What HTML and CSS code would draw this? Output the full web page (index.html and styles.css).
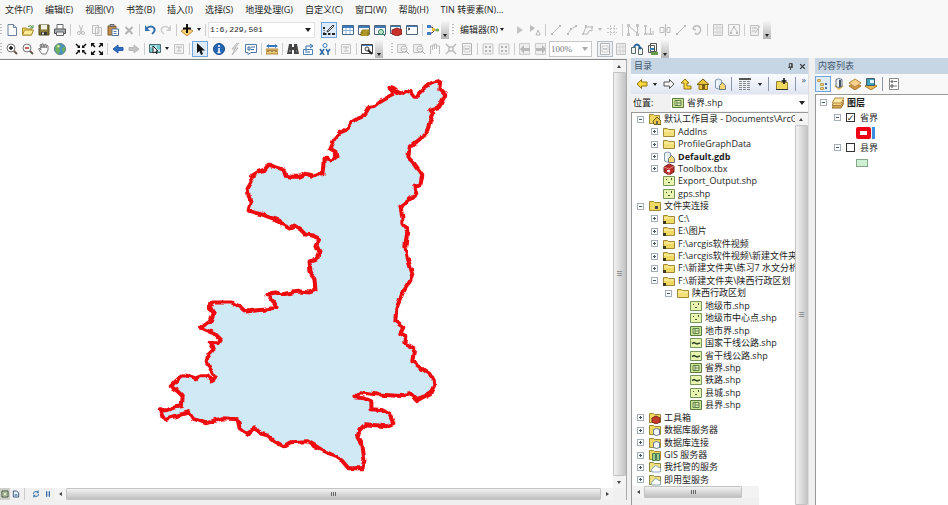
FILE: index.html
```html
<!DOCTYPE html>
<html lang="en">
<head>
<meta charset="utf-8">
<title>ArcMap</title>
<link rel="stylesheet" href="styles.css">
</head>
<body>
<svg class="sprite" aria-hidden="true">
  <symbol id="new" viewBox="0 0 12 12"><path d="M2 .5h5.500l3 3v8H2z" fill="#fff" stroke="#6a7f9c"/><path d="M7.500.5v3h3" fill="#dde8f4" stroke="#6a7f9c"/></symbol>
  <symbol id="open" viewBox="0 0 12 12"><path d="M.5 11V4h4l1 1h4v6z" fill="#f5d964" stroke="#a88b28"/><path d="M.5 11l2-5h9l-2 5z" fill="#ffec98" stroke="#a88b28"/><path d="M6 2.500q3-2 4.500 1M11 1v3H8" fill="none" stroke="#4a9444"/></symbol>
  <symbol id="save" viewBox="0 0 12 12"><path d="M1 1h10v10H1z" fill="#837a33" stroke="#4e4818"/><path d="M3 1h6v4.500H3z" fill="#f1f0e4"/><path d="M3 8h6v3H3z" fill="#333"/><path d="M4 8.500h2v2H4z" fill="#ddd"/></symbol>
  <symbol id="print" viewBox="0 0 12 12"><path d="M3 5V.5h6V5" fill="#fff" stroke="#666"/><path d="M.5 5h11v4.500H.5z" fill="#a5adb5" stroke="#555"/><path d="M2.500 8h7v3.500h-7z" fill="#eee" stroke="#666"/></symbol>
  <symbol id="cut" viewBox="0 0 12 12"><path d="M4 1l3 7M8 1L5 8" stroke="#c2c2c2" fill="none"/><circle cx="4" cy="9" r="1.500" fill="none" stroke="#bbb"/><circle cx="8" cy="9" r="1.500" fill="none" stroke="#bbb"/></symbol>
  <symbol id="copy" viewBox="0 0 12 12"><path d="M1.500 1.500h6v8h-6z M4.500 3.500h6v8h-6z" fill="#f3f3f3" stroke="#bdbdbd"/><path d="M6 6h3M6 8h3" stroke="#ccc"/></symbol>
  <symbol id="paste" viewBox="0 0 12 12"><path d="M1 2h8v9H1z" fill="#c38b45" stroke="#7c5b30"/><path d="M3 .5h4v2H3z" fill="#aaa" stroke="#666"/><path d="M5 5h6.500v6.500H5z" fill="#fff" stroke="#5572a0"/><path d="M6.500 7.500h3M6.500 9.500h3" stroke="#5b7cb2"/></symbol>
  <symbol id="del" viewBox="0 0 12 12"><path d="M2.500 3l7 7M9.500 3l-7 7" stroke="#b4b4b4" stroke-width="2"/></symbol>
  <symbol id="undo" viewBox="0 0 12 12"><path d="M3 4q4-3 7 0 2 3-2 6" fill="none" stroke="#3871ad" stroke-width="2"/><path d="M1 1v6h5z" fill="#3871ad"/></symbol>
  <symbol id="redo" viewBox="0 0 12 12"><path d="M9 4Q5 1 2 4q-2 3 2 6" fill="none" stroke="#ccc" stroke-width="1.500"/><path d="M11 1v6H6z" fill="#ccc"/></symbol>
  <symbol id="adddata" viewBox="0 0 12 12"><path d="M6 3l6 4-6 5-6-5z" fill="#f6ce77" stroke="#ba8e3c"/><path d="M6 0v9M2 4.500h8" stroke="#111" stroke-width="2"/></symbol>
  <symbol id="sketch" viewBox="0 0 12 12"><path d="M5 6l5-5 1 1-5 5-2 1z" fill="#fff" stroke="#333"/><path d="M1 4v6h10" fill="none" stroke="#333" stroke-dasharray="1 1"/><path d="M0 3h2v2H0zM0 9h3v2H0zM5 9h2v2H5zM9 9h3v2H9z" fill="#222"/></symbol>
  <symbol id="table" viewBox="0 0 12 12"><path d="M.5 1.500h11v9H.5z" fill="#fff" stroke="#41678f"/><path d="M1 2h10v2H1z" fill="#3b7cc0"/><path d="M4 4v6M8 4v6M1 6.500h10" stroke="#8db4d8"/></symbol>
  <symbol id="catalog" viewBox="0 0 12 12"><path d="M.5 1.500h11v9H.5z" fill="#fff" stroke="#52657d"/><path d="M1 2h10v2H1z" fill="#417bb6"/><path d="M4 6h7v4H4zM3 8h7v4H3z" fill="#d9bd34" stroke="#87731b"/></symbol>
  <symbol id="search" viewBox="0 0 12 12"><path d="M.5 1.500h11v9H.5z" fill="#f8fafc" stroke="#52657d"/><path d="M1 2h10v2H1z" fill="#417bb6"/><circle cx="7" cy="8" r="2.500" fill="#bfead0" stroke="#2c8060"/><path d="M9 10l2 2" stroke="#2c8060"/></symbol>
  <symbol id="toolwin" viewBox="0 0 12 12"><path d="M.5 1.500h10v8H.5z" fill="#f8fafc" stroke="#52657d"/><path d="M1 2h9v1H1z" fill="#417bb6"/><path d="M2 6l5-2 5 2v4l-5 2-5-2z" fill="#c9302b" stroke="#8d2420"/></symbol>
  <symbol id="toolbox" viewBox="0 0 12 12"><path d="M1 4l5-3 5 2v6l-5 3-5-3z" fill="#bc2d29" stroke="#752420"/><path d="M1 4l5 2 5-3M6 6v6" stroke="#e58278" fill="none"/><path d="M4 7h3v2H4z" fill="#eee"/></symbol>
  <symbol id="python" viewBox="0 0 12 12"><path d="M.5 1.500h11v9H.5z" fill="#f8fafc" stroke="#52657d"/><path d="M1 2h10v1H1z" fill="#417bb6"/><path d="M2 4l2 1-2 1" stroke="#333" fill="none"/></symbol>
  <symbol id="model" viewBox="0 0 12 12"><path d="M2 3h3l3 3M2 9h3l3-3h2" fill="none" stroke="#444"/><path d="M0 1h4v3H0z" fill="#427bc2"/><path d="M0 8h4v3H0z" fill="#427bc2"/><path d="M5 4h3v3H5z" fill="#eebd33"/><circle cx="10.500" cy="6" r="1.500" fill="#63a94d"/></symbol>
  <symbol id="zin" viewBox="0 0 12 12"><path d="M7 7l4 4" stroke="#66584e" stroke-width="2"/><circle cx="5" cy="5" r="4" fill="#f5f5f5" stroke="#777"/><path d="M5 3v4M3 5h4" stroke="#111" stroke-width="1.500"/></symbol>
  <symbol id="zout" viewBox="0 0 12 12"><path d="M7 7l4 4" stroke="#66584e" stroke-width="2"/><circle cx="5" cy="5" r="4" fill="#f5f5f5" stroke="#777"/><path d="M3 5h4" stroke="#b33" stroke-width="1.500"/></symbol>
  <symbol id="pan" viewBox="0 0 12 12"><path d="M4 11L1 7V5l2 2-1-5 1-1 1 4V1l1-.500L6 5l1-4 1 .500V5l1-3 1 1v4l-2 4z" fill="#fff" stroke="#777"/></symbol>
  <symbol id="globe" viewBox="0 0 12 12"><circle cx="6" cy="6" r="5.500" fill="#4c94c3" stroke="#577c85"/><path d="M2 2q4-2 5 1L5 5l1 3-2 3Q0 8 2 2zM8 5l3-1v3L9 10z" fill="#70b356"/><path d="M3 2l3 1-2 2z" fill="#e8f6d4"/></symbol>
  <symbol id="fin" viewBox="0 0 12 12"><path d="M1 1l3.500 3.500M11 1L7.500 4.500M1 11l3.500-3.500M11 11L7.500 7.500" stroke="#111" stroke-width="1.500"/><path d="M5 2v3H2zM7 2v3h3zM5 10V7H2zM7 10V7h3z" fill="#111"/></symbol>
  <symbol id="fout" viewBox="0 0 12 12"><path d="M1 1l3 3M11 1L8 4M1 11l3-3M11 11L8 8" stroke="#111" stroke-width="1.500"/><path d="M0 0h4L0 4zM12 0v4L8 0zM0 12V8l4 4zM12 12H8l4-4z" fill="#111"/></symbol>
  <symbol id="back" viewBox="0 0 12 12"><path d="M1 6l5-4v2.500h5v3H6V10z" fill="#2d6fc4" stroke="#2858a5"/></symbol>
  <symbol id="fwd" viewBox="0 0 12 12"><path d="M11 6L6 2v2.500H1v3h5V10z" fill="#c3c3c3" stroke="#b8b8b8"/></symbol>
  <symbol id="selfeat" viewBox="0 0 12 12"><path d="M.5 1.500h11v8H.5z" fill="#75c8cf" stroke="#4b6e74"/><path d="M1 3l4 2 1 4M7 2v4l4 2" stroke="#fff" fill="none"/><path d="M4 3l5 5H7l1 3-2-2-2 1z" fill="#fff" stroke="#222"/></symbol>
  <symbol id="gray" viewBox="0 0 12 12"><path d="M1.500 1.500h9v9h-9z" fill="#f1f1f1" stroke="#c4c4c4"/><path d="M3 4h6M6 4v3M4 8h4" stroke="#bbb" fill="none"/></symbol>
  <symbol id="pointer" viewBox="0 0 12 12"><path d="M3 0v10l2.500-2L7 12l2-1-1.500-3.500H11z" fill="#111"/></symbol>
  <symbol id="info" viewBox="0 0 12 12"><circle cx="6" cy="6" r="5.500" fill="#2468b5" stroke="#194b86"/><path d="M6 2v2M6 5v5M4.500 9.500h3" stroke="#fff" stroke-width="1.500"/></symbol>
  <symbol id="flash" viewBox="0 0 12 12"><path d="M8 0L3 6h3l-3 6 6-7H6l4-5z" fill="#ddd" stroke="#b8b8b8"/></symbol>
  <symbol id="popup" viewBox="0 0 12 12"><path d="M.5 1.500h11v8H6l-3 2v-2H.5z" fill="#fff" stroke="#507aa7"/><path d="M3 4h2v3H3zM6 4h4M6 6.500h3" stroke="#386999" fill="none"/></symbol>
  <symbol id="measure" viewBox="0 0 12 12"><path d="M0 6h12v5H0z" fill="#edc570" stroke="#ad853c"/><path d="M2 7v2M4 7v1M6 7v2M8 7v1M10 7v2" stroke="#5c4a25"/><path d="M0 3l3-2v1h6V1l3 2-3 2V4H3v1z" fill="#3877bd"/></symbol>
  <symbol id="find" viewBox="0 0 12 12"><path d="M2 1h3v3h2V1h3l2 10H7V7H5v4H0z" fill="#454545"/><path d="M2 8h2M9 8h1" stroke="#aaa"/></symbol>
  <symbol id="route" viewBox="0 0 12 12"><path d="M.5 6.500h9v5h-9z" fill="#fff" stroke="#4d82b8"/><path d="M3 8V3h6M7 1l3 2-3 2M2 9h5" fill="none" stroke="#3270aa"/></symbol>
  <symbol id="xy" viewBox="0 0 12 12"><circle cx="6" cy="2.500" r="2" fill="#fff" stroke="#347abb"/><path d="M1 6l4 6M5 6l-4 6M7 6l2 3 2-3M9 9v3" fill="none" stroke="#2e6cab" stroke-width="1.500"/></symbol>
  <symbol id="viewer" viewBox="0 0 12 12"><path d="M.5 1.500h11v9H.5z" fill="#fff" stroke="#444"/><path d="M1 2h10v1H1z" fill="#4c83bf"/><circle cx="6" cy="6" r="2" fill="#eee" stroke="#444"/><path d="M7 7l4 4" stroke="#222" stroke-width="2"/></symbol>
  <symbol id="gplay" viewBox="0 0 12 12"><path d="M4 2l6 4-6 4z" fill="#c3c3c3"/></symbol>
  <symbol id="gplay2" viewBox="0 0 12 12"><path d="M1 1l5 3-5 4z" fill="#bbb"/><path d="M9 6l2 5H7z" fill="none" stroke="#bbb"/></symbol>
  <symbol id="gline" viewBox="0 0 12 12"><path d="M2 10l7-7" stroke="#bdbdbd"/><path d="M1 9h2v2H1zM9 1h2v2H9z" fill="#b9b9b9"/></symbol>
  <symbol id="garc" viewBox="0 0 12 12"><path d="M2 11q1-6 7-8" stroke="#bdbdbd" fill="none"/><path d="M1 9h2v2H1zM4 4h2v2H4zM9 1h2v2H9z" fill="#b9b9b9"/></symbol>
  <symbol id="gpoly" viewBox="0 0 12 12"><path d="M1 10L4 3h6v4q-4-2-4 3z" stroke="#b9b9b9" fill="none"/><path d="M3 1h2v3H3zM9 2h2v2H9zM0 9h2v2H0z" fill="#c2c2c2"/></symbol>
  <symbol id="gsnap" viewBox="0 0 12 12"><path d="M1 4.500h10M1 8.500h10M4.500 1v10M8.500 1v10" stroke="#c6c6c6" fill="none" stroke-dasharray="2 1"/></symbol>
  <symbol id="gvert" viewBox="0 0 12 12"><path d="M1.500 10.500v-9l9 8v-8" stroke="#bbb" fill="none"/><path d="M0 0h3v3H0zM0 9h3v3H0zM9 0h3v3H9zM9 9h3v3H9z" fill="#c5c5c5"/></symbol>
  <symbol id="gresh" viewBox="0 0 12 12"><path d="M2.500 1v9h5V4M10 7v4" stroke="#bbb" fill="none"/><path d="M1 1h3v2H1zM1 9h3v2H1zM6 9h3v2H6z" fill="#c5c5c5"/></symbol>
  <symbol id="gcut" viewBox="0 0 12 12"><path d="M6.500 0v12M1 3.500h4v5H1zM8 3.500h3v5H8z" stroke="#bbb" fill="none"/></symbol>
  <symbol id="grot" viewBox="0 0 12 12"><path d="M2 5q1-4 5-3 4 2 2 6-3 4-5 1M2 5l3 1" stroke="#bbb" fill="none" stroke-width="1.500"/></symbol>
  <symbol id="ggrid" viewBox="0 0 12 12"><path d="M1.500.5h9v11h-9z" fill="#eee" stroke="#c2c2c2"/><path d="M2 4h8M2 8h8M5 1v10M8 1v10" stroke="#d4d4d4"/></symbol>
  <symbol id="gtri" viewBox="0 0 12 12"><path d="M.5.5h11v11H.5z" fill="#f4f4f4" stroke="#c2c2c2"/><path d="M2 9l4-6 4 6" fill="none" stroke="#bbb"/><path d="M5 2h2v2H5zM2 8h2v2H2zM8 8h2v2H8z" fill="#bbb"/></symbol>
  <symbol id="gform" viewBox="0 0 12 12"><path d="M1.500 1.500h8v10h-8z" fill="#eee" stroke="#c0c0c0"/><path d="M3 4h5M3 7h3M6 9l5-7" stroke="#bbb"/></symbol>
  <symbol id="gzoom" viewBox="0 0 12 12"><path d="M.5 1.500h8v8h-8z" fill="#eee" stroke="#c2c2c2"/><circle cx="7" cy="6" r="3" fill="#f6f6f6" stroke="#b6b6b6"/><path d="M5.500 6h3M9 8l3 3" stroke="#aaa"/></symbol>
  <symbol id="gpan" viewBox="0 0 12 12"><path d="M1.500 11V3h2v4-5h2v4-5h2v5-3h3v8" fill="none" stroke="#bbb"/></symbol>
  <symbol id="gfull" viewBox="0 0 12 12"><path d="M1 1l3 3M11 1L8 4M1 11l3-3M11 11L8 8M4 4h4v4H4z" stroke="#bbb" fill="none" stroke-width="1.500"/></symbol>
  <symbol id="gfour" viewBox="0 0 12 12"><path d="M1 1h10v10H1z" fill="#f0f0f0" stroke="#c8c8c8"/><path d="M3 3h2v2H3zM7 3h2v2H7zM3 7h2v2H3zM7 7h2v2H7z" fill="#b5b5b5"/></symbol>
  <symbol id="gback" viewBox="0 0 12 12"><path d="M.5.5h10v11H.5z" fill="#eee" stroke="#ccc"/><path d="M1 6l4-4v3h6v3H5v3z" fill="#b9b9b9"/></symbol>
  <symbol id="gnext" viewBox="0 0 12 12"><path d="M.5.5h10v11H.5z" fill="#eee" stroke="#ccc"/><path d="M11 6L7 2v3H1v3h6v3z" fill="#b9b9b9"/></symbol>
  <symbol id="gpage" viewBox="0 0 12 12"><path d="M1.500.5h9v11h-9z" fill="#f8f8f8" stroke="#b4b4b4"/><path d="M3 3h6v6H3z" fill="none" stroke="#ccc"/><path d="M4 6h4" stroke="#999"/></symbol>
  <symbol id="frames" viewBox="0 0 12 12"><path d="M.5 4.500h4v6h-4zM7.500 5.500h4v6h-4z" fill="#eef5f0" stroke="#5a6a66"/><path d="M3 4q3-5 6 0" stroke="#28669c" fill="none" stroke-width="2"/><path d="M7 4h4L9 7z" fill="#28669c"/></symbol>
  <symbol id="driven" viewBox="0 0 12 12"><path d="M3.500.5h6v8h-6zM1.500 2.500h6v7h-6z" fill="#f5f7f0" stroke="#555"/><path d="M4 9h7v3H4z" fill="#669b48"/><path d="M3 5h4v2H3z" fill="#377eba"/></symbol>
  <symbol id="yback" viewBox="0 0 12 12"><path d="M1 6l4.500-4.500V4H11v4H5.500v2.500z" fill="#ffd83e" stroke="#8e7317"/></symbol>
  <symbol id="wfwd" viewBox="0 0 12 12"><path d="M11 6L6.500 1.500V4H1v4h5.500v2.500z" fill="#f5f5f5" stroke="#555"/></symbol>
  <symbol id="up" viewBox="0 0 12 12"><path d="M5 1l4 4H7v3h4v3H4V5H1z" fill="#ffd83e" stroke="#8e7317"/></symbol>
  <symbol id="home" viewBox="0 0 12 12"><path d="M2 6v5.500h8.500V6" fill="#edca46" stroke="#8e7317"/><path d="M0 6.500L6 1l6 5.500z" fill="#eac23e" stroke="#755e10"/><path d="M5 7h3v4H5z" fill="#7c5d20"/></symbol>
  <symbol id="gdbhome" viewBox="0 0 12 12"><path d="M1.500 2q3-2 6 0v8q-3 2-6 0z" fill="#e6eef5" stroke="#8499ac"/><path d="M5.500 7.500l3-3 3 3v4h-6z" fill="#f5d871" stroke="#6c7785"/><path d="M3 3v6" stroke="#fff"/></symbol>
  <symbol id="grid" viewBox="0 0 12 12"><path d="M0 1h12" stroke="#555" stroke-width="2"/><path d="M0 3.500h12M0 5.500h12M0 7.500h12M0 9.500h12M0 11.500h12" stroke="#888" stroke-dasharray="3 1"/></symbol>
  <symbol id="connect" viewBox="0 0 12 12"><path d="M.5 3.500h4l1 1h6v7H.5z" fill="#f2d85f" stroke="#96802f"/><path d="M8 0v6M5.500 3h5" stroke="#111" stroke-width="1.500"/><path d="M0 11.500h12" stroke="#333"/></symbol>
  <symbol id="folder" viewBox="0 0 12 12"><path d="M.5 10.500v-8h4l1 1h6v7z" fill="#f3df77" stroke="#a08939"/><path d="M1 5h10" stroke="#fff3b5"/></symbol>
  <symbol id="folderc" viewBox="0 0 12 12"><path d="M.5 10.500v-8h4l1 1h6v7z" fill="#f0d962" stroke="#a08939"/><path d="M1 5h10" stroke="#fff3b5"/><path d="M0 8h3v3H0z" fill="#3c3821"/></symbol>
  <symbol id="fhome" viewBox="0 0 12 12"><path d="M.5 10.500v-9h4l1 1h5v8z" fill="#f0d962" stroke="#a08939"/><path d="M4 8l4-4 4 4v3.500H5z" fill="#e9c343" stroke="#705e20"/><path d="M7 8h2v3H7z" fill="#665"/></symbol>
  <symbol id="fconn" viewBox="0 0 12 12"><path d="M.5 10.500v-9h4l1 1h6v8z" fill="#f0d962" stroke="#a08939"/><path d="M6 6h3v3H6z" fill="#444"/></symbol>
  <symbol id="ftool" viewBox="0 0 12 12"><path d="M.5 10.500v-9h4l1 1h6v8z" fill="#f0d962" stroke="#a08939"/><path d="M3 6l4-2 4 2v4l-4 2-4-2z" fill="#c33d2c" stroke="#7d241c"/></symbol>
  <symbol id="fdb" viewBox="0 0 12 12"><path d="M.5 10.500v-9h4l1 1h6v8z" fill="#f0d962" stroke="#a08939"/><path d="M4.500 5.500q3-2 6 0v5q-3 2-6 0z" fill="#f4f7f9" stroke="#66798c"/></symbol>
  <symbol id="fgis" viewBox="0 0 12 12"><path d="M.5 10.500v-9h4l1 1h6v8z" fill="#f0d962" stroke="#a08939"/><path d="M3.500 4.500h3v7h-3zM7.500 4.500h3v7h-3z" fill="#9fca8f" stroke="#4a7e54"/></symbol>
  <symbol id="fcloud" viewBox="0 0 12 12"><path d="M.5 10.500v-9h4l1 1h6v8z" fill="#f0df82" stroke="#8b8b43"/><path d="M3 11q-2-3 1-4 2-4 5-1 4 1 2 5z" fill="#fff" stroke="#86a7b7"/></symbol>
  <symbol id="pts" viewBox="0 0 12 12"><path d="M.5 1.500h11v9H.5z" fill="#e8f4b0" stroke="#76965a"/><path d="M3 4h1v1H3zM8 3h1v2H8zM5 7h2v1H5z" fill="#3b5630"/></symbol>
  <symbol id="poly" viewBox="0 0 12 12"><path d="M.5 1.500h11v9H.5z" fill="#cfe392" stroke="#587a43"/><path d="M3 3.500h6v5H3zM5 4v4M5 6h4" fill="#e3f0b2" stroke="#5e8150"/></symbol>
  <symbol id="lin" viewBox="0 0 12 12"><path d="M.5 1.500h11v9H.5z" fill="#e8f4b0" stroke="#76965a"/><path d="M2 6.500l2-1 3 1.500 3-1" fill="none" stroke="#33482b" stroke-width="1.500"/></symbol>
  <symbol id="layers" viewBox="0 0 12 12"><path d="M3 6h9l-3 5H0z" fill="#dda951" stroke="#96702e"/><path d="M3 3.500h9l-3 5H0z" fill="#f6d183" stroke="#a6803c"/><path d="M3 1h9L9 6H0z" fill="#ffe8aa" stroke="#b28b43"/></symbol>
  <symbol id="order" viewBox="0 0 12 12"><path d="M.5 1.500h3v2h-3zM3.500 5.500h3v2h-3zM3.500 9.500h3v2h-3z" fill="#f1cb64" stroke="#c0a25c"/><path d="M9 5v2M9 9v2" stroke="#456f9e" stroke-width="2"/></symbol>
  <symbol id="source" viewBox="0 0 12 12"><path d="M1 8l4-2 6 2-5 4z" fill="#e8bd4a"/><path d="M3 1.500q3-2 6 0v7q-3 2-6 0z" fill="#edf1f5" stroke="#647487"/><path d="M7 2v7" stroke="#4a5665" stroke-width="2"/></symbol>
  <symbol id="visible" viewBox="0 0 12 12"><path d="M6 5l6 3-6 4-6-4z" fill="#d49943" stroke="#a6752d"/><path d="M6 1l6 4-6 4-6-4z" fill="#f9d18b" stroke="#b38643"/></symbol>
  <symbol id="selected" viewBox="0 0 12 12"><path d="M6 5l6 3-6 4-6-4z" fill="#e8b750" stroke="#a6752d"/><path d="M1.500.5h8v7h-8z" fill="#3da2b6" stroke="#425c6e"/><path d="M5 2h4v3H5z" fill="#dff7ff"/></symbol>
  <symbol id="options" viewBox="0 0 12 12"><path d="M1.500.5h9v11h-9z" fill="#fff" stroke="#888"/><path d="M3 3h2v1H3zM3 7h2v2H3z" fill="none" stroke="#555"/><path d="M6 3.500h3M6 8h3" stroke="#777"/></symbol>
  <symbol id="refresh" viewBox="0 0 12 12"><path d="M2 6q0-4 5-4l2 1M10 6q0 4-5 4L3 9" stroke="#3a73a8" fill="none" stroke-width="1.500"/><path d="M10 0v5H6zM2 12V7h4z" fill="#3a73a8"/></symbol>
  <symbol id="pause" viewBox="0 0 12 12"><path d="M3 2h2v8H3zM7 2h2v8H7z" fill="#3c6da5"/></symbol>
  <symbol id="dataview" viewBox="0 0 12 12"><path d="M1.500 1.500h9v9h-9z" fill="#dbe8c6" stroke="#3e4a3e" stroke-width="1.500"/><path d="M4 4h4v4H4z" fill="#fafbed" stroke="#789364"/></symbol>
  <symbol id="layview" viewBox="0 0 12 12"><path d="M2 1.500h5l3 3v6H2z" fill="#e9f2fb" stroke="#405d80" stroke-width="1.500"/><path d="M4 6h4v3H4z" fill="#779ac0"/></symbol>
  <symbol id="pin" viewBox="0 0 12 12"><path d="M4 1h5v6H4zM2 7.500h8M6 8v4M8 1v6" stroke="#333" fill="none" stroke-width="1.500"/></symbol>
  <symbol id="close" viewBox="0 0 12 12"><path d="M2 2l8 8M10 2l-8 8" stroke="#333" stroke-width="2"/></symbol>
</svg>

<nav class="menubar">
  <button>文件(F)</button><button>编辑(E)</button><button>视图(V)</button><button>书签(B)</button><button>插入(I)</button><button>选择(S)</button><button>地理处理(G)</button><button>自定义(C)</button><button>窗口(W)</button><button>帮助(H)</button><button>TIN 转要素(N)...</button>
</nav>

<div class="toolbar">
  <i class="grip"></i>
  <button aria-label="New"><svg><use href="#new"/></svg></button><button aria-label="Open"><svg><use href="#open"/></svg></button><button aria-label="Save"><svg><use href="#save"/></svg></button><button aria-label="Print"><svg><use href="#print"/></svg></button>
  <i class="sep"></i>
  <button aria-label="Cut"><svg><use href="#cut"/></svg></button><button aria-label="Copy"><svg><use href="#copy"/></svg></button><button aria-label="Paste"><svg><use href="#paste"/></svg></button><button aria-label="Delete"><svg><use href="#del"/></svg></button>
  <i class="sep"></i>
  <button aria-label="Undo"><svg><use href="#undo"/></svg></button><button aria-label="Redo"><svg><use href="#redo"/></svg></button>
  <i class="sep"></i>
  <button aria-label="Add data"><svg><use href="#adddata"/></svg></button><button class="drop" aria-label="Add data menu"></button>
  <i class="sep"></i>
  <select class="scale" aria-label="Map scale"><option>1:6,229,501</option></select>
  <button class="on" aria-label="Editor toolbar"><svg><use href="#sketch"/></svg></button>
  <button aria-label="Contents"><svg><use href="#table"/></svg></button><button aria-label="Catalog"><svg><use href="#catalog"/></svg></button><button aria-label="Search"><svg><use href="#search"/></svg></button><button aria-label="Toolbox"><svg><use href="#toolwin"/></svg></button><button aria-label="Python"><svg><use href="#python"/></svg></button>
  <i class="sep"></i>
  <button aria-label="Model builder"><svg><use href="#model"/></svg></button>
  <button class="more" aria-label="Toolbar options"></button>
  <i class="grip"></i>
  <button class="text">编辑器(R)</button><button class="drop" aria-label="Editor menu"></button>
  <i class="sep blank"></i>
  <button aria-label="Edit tool"><svg><use href="#gplay"/></svg></button><button aria-label="Annotation"><svg><use href="#gplay2"/></svg></button>
  <i class="sep"></i>
  <button aria-label="Straight"><svg><use href="#gline"/></svg></button><button aria-label="Arc"><svg><use href="#garc"/></svg></button><button aria-label="Trace"><svg><use href="#gpoly"/></svg></button><button class="drop dim" aria-label="Trace menu"></button><button aria-label="Point"><svg><use href="#gsnap"/></svg></button>
  <i class="sep"></i>
  <button aria-label="Vertices"><svg><use href="#gvert"/></svg></button><button aria-label="Reshape"><svg><use href="#gresh"/></svg></button><button aria-label="Cut polygons"><svg><use href="#gcut"/></svg></button><button aria-label="Split"><svg><use href="#gline"/></svg></button><button aria-label="Rotate"><svg><use href="#grot"/></svg></button>
  <i class="sep"></i>
  <button aria-label="Attributes"><svg><use href="#ggrid"/></svg></button><button aria-label="Sketch properties"><svg><use href="#gtri"/></svg></button>
  <i class="sep"></i>
  <button aria-label="Create features"><svg><use href="#gform"/></svg></button>
  <button class="more" aria-label="Toolbar options"></button>
</div>

<div class="toolbar">
  <i class="grip"></i>
  <button aria-label="Zoom in"><svg><use href="#zin"/></svg></button><button aria-label="Zoom out"><svg><use href="#zout"/></svg></button><button aria-label="Pan"><svg><use href="#pan"/></svg></button><button aria-label="Full extent"><svg><use href="#globe"/></svg></button>
  <i class="sep blank"></i>
  <button aria-label="Fixed zoom in"><svg><use href="#fin"/></svg></button><button aria-label="Fixed zoom out"><svg><use href="#fout"/></svg></button>
  <i class="sep"></i>
  <button aria-label="Back"><svg><use href="#back"/></svg></button><button aria-label="Forward"><svg><use href="#fwd"/></svg></button>
  <i class="sep"></i>
  <button aria-label="Select features"><svg><use href="#selfeat"/></svg></button><button class="drop" aria-label="Select menu"></button><button aria-label="Clear selection"><svg><use href="#gray"/></svg></button>
  <i class="sep"></i>
  <button class="on" aria-label="Select elements"><svg><use href="#pointer"/></svg></button>
  <button aria-label="Identify"><svg><use href="#info"/></svg></button><button aria-label="Hyperlink"><svg><use href="#flash"/></svg></button><button aria-label="HTML popup"><svg><use href="#popup"/></svg></button>
  <i class="sep"></i>
  <button aria-label="Measure"><svg><use href="#measure"/></svg></button>
  <i class="sep"></i>
  <button aria-label="Find"><svg><use href="#find"/></svg></button><button aria-label="Find route"><svg><use href="#route"/></svg></button><button aria-label="Go to XY"><svg><use href="#xy"/></svg></button>
  <i class="sep"></i>
  <button aria-label="Time slider"><svg><use href="#gray"/></svg></button>
  <i class="sep"></i>
  <button aria-label="Viewer window"><svg><use href="#viewer"/></svg></button>
  <button class="more" aria-label="Toolbar options"></button>
  <i class="grip wide"></i>
  <button aria-label="Layout zoom in"><svg><use href="#gzoom"/></svg></button><button aria-label="Layout zoom out"><svg><use href="#gzoom"/></svg></button><button aria-label="Layout pan"><svg><use href="#gpan"/></svg></button><button aria-label="Whole page"><svg><use href="#gfull"/></svg></button><button aria-label="Actual size"><svg><use href="#gpage"/></svg></button>
  <i class="sep"></i>
  <button aria-label="Layout fixed in"><svg><use href="#gfour"/></svg></button><button aria-label="Layout fixed out"><svg><use href="#gfour"/></svg></button>
  <i class="sep"></i>
  <button aria-label="Layout back"><svg><use href="#gback"/></svg></button><button aria-label="Layout forward"><svg><use href="#gnext"/></svg></button>
  <select class="percent" aria-label="Layout zoom"><option>100%</option></select>
  <button class="on dim" aria-label="Draft mode"><svg><use href="#gpage"/></svg></button><button aria-label="Focus frame"><svg><use href="#ggrid"/></svg></button><button aria-label="Change layout"><svg><use href="#frames"/></svg></button><button aria-label="Driven pages"><svg><use href="#driven"/></svg></button>
  <button class="more" aria-label="Toolbar options"></button>
</div>

<main class="workspace">
  <section class="mapcol">
    <div class="maprow">
      <svg class="map" viewBox="0 60 614 427" role="img" aria-label="Map">
        <defs><filter id="rough" x="-5%" y="-5%" width="110%" height="110%" color-interpolation-filters="sRGB"><feTurbulence type="fractalNoise" baseFrequency=".16" numOctaves="1" seed="4"/><feDisplacementMap in="SourceGraphic" scale="5" xChannelSelector="R" yChannelSelector="G"/></filter></defs>
        <path class="province" filter="url(#rough)" d="M441 80L433 82 425 87 421 91 418 96 415 96 411 91 407 90 402 93 398 91 393 87 390 86 391 89 394 94 388 97 381 101 376 105 370 106 367 111 363 116 358 118 353 121 349 127 345 130 340 132 335 139 331 148 336 151 337 156 332 160 328 158 324 158 324 163 323 174 318 173 313 175 306 173 300 176 291 176 286 175 284 169 278 167 269 164 265 169 259 171 251 176 252 181 248 188 249 195 251 201 249 210 255 212 263 214 271 217 280 220 283 224 290 228 295 225 301 229 306 234 313 235 320 238 317 245 320 251 317 259 310 261 311 271 315 279 316 290 310 292 301 291 293 292 283 294 275 292 268 294 273 300 277 307 266 309 256 310 246 311 240 306 231 302 221 302 213 302 210 306 214 313 211 320 201 327 208 330 215 333 221 339 218 343 210 342 214 348 209 353 207 361 210 368 215 376 212 380 208 376 201 376 196 378 190 376 183 375 176 381 171 386 178 391 183 396 182 406 175 407 166 410 160 410 165 419 175 416 189 412 193 418 206 423 223 418 238 419 240 428 248 434 255 427 260 433 268 435 275 441 284 446 291 442 308 441 323 450 336 456 343 461 349 468 363 468 365 460 363 445 358 437 360 430 366 424 376 425 387 426 394 423 390 414 383 410 372 409 372 401 365 398 355 397 361 392 376 394 390 395 406 396 410 392 418 400 431 393 435 385 434 376 425 370 413 361 415 348 406 343 407 336 401 333 404 327 396 321 397 308 403 293 411 280 413 273 409 260 406 246 408 230 403 223 403 216 401 206 408 201 417 193 415 186 421 185 423 174 415 163 409 157 410 147 421 138 427 133 430 123 434 113 431 109 440 106 446 94 440 88z"/>
      </svg>
      <div class="vbar"><i class="arrow up"></i><i class="thumb">≡</i><i class="arrow down"></i></div>
    </div>
    <div class="mapfoot">
      <button class="pressed" aria-label="Data view"><svg><use href="#dataview"/></svg></button><button aria-label="Layout view"><svg><use href="#layview"/></svg></button><i class="sep"></i><button class="gap" aria-label="Refresh"><svg><use href="#refresh"/></svg></button><button aria-label="Pause drawing"><svg><use href="#pause"/></svg></button>
      <div class="hbar"><i class="arrow left"></i><i class="thumb"><i class="ridges"></i></i><i class="arrow right"></i></div>
    </div>
  </section>

  <aside class="catalog">
    <header><h2>目录</h2><button aria-label="Auto hide"><svg><use href="#pin"/></svg></button><button aria-label="Close"><svg><use href="#close"/></svg></button></header>
    <div class="tools">
      <button aria-label="Back"><svg><use href="#yback"/></svg></button><button class="drop" aria-label="History"></button><button aria-label="Forward"><svg><use href="#wfwd"/></svg></button><button aria-label="Up"><svg><use href="#up"/></svg></button><button aria-label="Home"><svg><use href="#home"/></svg></button><button aria-label="Default geodatabase"><svg><use href="#gdbhome"/></svg></button><i class="sep"></i><button class="large" aria-label="View"><svg><use href="#grid"/></svg></button><button class="drop" aria-label="View menu"></button><i class="sep"></i><button class="large" aria-label="Connect folder"><svg><use href="#connect"/></svg></button><i class="sep"></i><button class="chev" aria-label="More tools">»</button>
    </div>
    <div class="location"><label for="loc">位置:</label><svg><use href="#poly"/></svg><select id="loc"><option>省界.shp</option></select></div>
    <div class="browse">
      <div class="treecol">
        <ul class="tree">
          <li><i class="box minus"></i><svg><use href="#fhome"/></svg>默认工作目录 - Documents\ArcGIS</li>
          <li class="l1"><i class="box"></i><svg><use href="#folder"/></svg>AddIns</li>
          <li class="l1"><i class="box"></i><svg><use href="#folder"/></svg>ProfileGraphData</li>
          <li class="l1"><i class="box"></i><svg><use href="#gdbhome"/></svg><b>Default.gdb</b></li>
          <li class="l1"><i class="box"></i><svg><use href="#toolbox"/></svg>Toolbox.tbx</li>
          <li class="l1"><i class="box none"></i><svg><use href="#pts"/></svg>Export_Output.shp</li>
          <li class="l1"><i class="box none"></i><svg><use href="#pts"/></svg>gps.shp</li>
          <li><i class="box minus"></i><svg><use href="#fconn"/></svg>文件夹连接</li>
          <li class="l1"><i class="box"></i><svg><use href="#folderc"/></svg>C:\</li>
          <li class="l1"><i class="box"></i><svg><use href="#folderc"/></svg>E:\图片</li>
          <li class="l1"><i class="box"></i><svg><use href="#folderc"/></svg>F:\arcgis软件视频</li>
          <li class="l1"><i class="box"></i><svg><use href="#folderc"/></svg>F:\arcgis软件视频\新建文件夹</li>
          <li class="l1"><i class="box"></i><svg><use href="#folderc"/></svg>F:\新建文件夹\练习7 水文分析</li>
          <li class="l1"><i class="box minus"></i><svg><use href="#folderc"/></svg>F:\新建文件夹\陕西行政区划</li>
          <li class="l2"><i class="box minus"></i><svg><use href="#folder"/></svg>陕西行政区划</li>
          <li class="l3"><svg><use href="#pts"/></svg>地级市.shp</li>
          <li class="l3"><svg><use href="#pts"/></svg>地级市中心点.shp</li>
          <li class="l3"><svg><use href="#poly"/></svg>地市界.shp</li>
          <li class="l3"><svg><use href="#lin"/></svg>国家干线公路.shp</li>
          <li class="l3"><svg><use href="#lin"/></svg>省干线公路.shp</li>
          <li class="l3"><svg><use href="#poly"/></svg><span class="current">省界.shp</span></li>
          <li class="l3"><svg><use href="#lin"/></svg>铁路.shp</li>
          <li class="l3"><svg><use href="#pts"/></svg>县城.shp</li>
          <li class="l3"><svg><use href="#poly"/></svg>县界.shp</li>
          <li><i class="box"></i><svg><use href="#ftool"/></svg>工具箱</li>
          <li><i class="box"></i><svg><use href="#fdb"/></svg>数据库服务器</li>
          <li><i class="box"></i><svg><use href="#fdb"/></svg>数据库连接</li>
          <li><i class="box"></i><svg><use href="#fgis"/></svg>GIS 服务器</li>
          <li><i class="box"></i><svg><use href="#fcloud"/></svg>我托管的服务</li>
          <li><i class="box"></i><svg><use href="#fcloud"/></svg>即用型服务</li>
        </ul>
        <div class="treefoot"><div class="hbar"><i class="arrow left"></i><i class="thumb"><i class="ridges"></i></i></div></div>
      </div>
      <div class="vbar"><i class="arrow up"></i><i class="thumb">≡</i></div>
    </div>
  </aside>

  <aside class="contents">
    <header><h2>内容列表</h2></header>
    <div class="tools">
      <button class="on" aria-label="List by drawing order"><svg><use href="#order"/></svg></button><button aria-label="List by source"><svg><use href="#source"/></svg></button><button aria-label="List by visibility"><svg><use href="#visible"/></svg></button><button aria-label="List by selection"><svg><use href="#selected"/></svg></button><i class="sep"></i><button aria-label="Options"><svg><use href="#options"/></svg></button>
    </div>
    <ul class="layers">
      <li><i class="box minus"></i><svg><use href="#layers"/></svg><b>图层</b></li>
      <li class="l1"><i class="box minus"></i><input type="checkbox" id="sheng" checked><label for="sheng">省界</label></li>
      <li class="l2"><i class="swatch red"></i><i class="caret"></i></li>
      <li class="l1"><i class="box minus"></i><input type="checkbox" id="xian"><label for="xian">县界</label></li>
      <li class="l2"><i class="swatch green"></i></li>
    </ul>
  </aside>
</main>
</body>
</html>
```
FILE: styles.css
```css
* { box-sizing: border-box; }
html, body { height: 100%; }
body {
  margin: 0;
  display: flex;
  flex-direction: column;
  overflow: hidden;
  background: #f0f0f0;
  color: #1c1c1c;
  font: 9px/12px "Open Sans", "Noto Sans CJK SC", sans-serif;
}
button, select, input { font: inherit; color: inherit; margin: 0; }
button { padding: 0; border: 0; background: none; white-space: nowrap; }
select { appearance: none; border: 1px solid #e2e2e2; border-radius: 0; }
i { font-style: normal; flex: none; }
h2 { margin: 0; font-size: 9px; font-weight: 400; }
ul { margin: 0; padding: 0; list-style: none; }
.sprite { width: 0; height: 0; flex: none; display: block; }

.menubar { display: flex; align-items: center; gap: 12px; height: 20px; padding: 0 5px; background: #f8f8f8; flex: none; }

.toolbar { display: flex; align-items: center; height: 19px; flex: none; background: #f8f8f8; }
.toolbar button { display: flex; align-items: center; justify-content: center; width: 16px; height: 16px; flex: none; }
.toolbar svg { width: 12px; height: 12px; }
.toolbar .text { width: auto; padding-left: 4px; }
.sep { width: 1px; height: 12px; margin: 0 2px; background: #ccc; }
.sep.blank { background: none; }
.grip { width: 2px; height: 12px; margin-right: 2px; background: repeating-linear-gradient(#bbb 0 1px, #f8f8f8 1px 3px); }
.grip.wide { margin-left: 5px; }
button.drop::after, .more::after { content: ""; border: 2px solid transparent; border-top: 3px solid #222; border-bottom: 0; }
.toolbar .drop { width: 8px; }
.toolbar .dim::after { border-top-color: #bbb; }
.toolbar .more { width: 8px; height: 18px; align-items: flex-end; padding-bottom: 2px; margin-right: 3px; background: linear-gradient(#f5f5f5, #b5b5b5); }
.toolbar .on { border: 1px solid #70a6d9; background: #deecfa; margin-right: 3px; }
.toolbar .on.dim { border-color: #b4bcc5; background: #ebf0f5; margin: 0 0 0 5px; }
.scale, .percent, .location select {
  height: 16px;
  background: #fff url("data:image/svg+xml,%3Csvg xmlns='http://www.w3.org/2000/svg' width='6' height='4'%3E%3Cpath d='M0 0h6L3 4z' fill='%23222'/%3E%3C/svg%3E") no-repeat right 3px center;
}
.scale { width: 107px; margin-right: 6px; padding: 0 1px; font-family: "Liberation Mono", monospace; font-size: 8px; }
.percent {
  width: 43px; padding: 0 1px; color: #777; font-family: "Liberation Serif", serif; border-color: #c8c8c8;
  background-image: url("data:image/svg+xml,%3Csvg xmlns='http://www.w3.org/2000/svg' width='6' height='4'%3E%3Cpath d='M0 0h6L3 4z' fill='%23aaa'/%3E%3C/svg%3E");
}

.workspace { display: flex; flex: 1; min-height: 0; }
.mapcol { flex: 1; min-width: 0; display: flex; flex-direction: column; margin: 1px 4px 5px 0; border-top: 1px solid #858585; border-right: 1px solid #aaa; }
.maprow { flex: 1; display: flex; min-height: 0; background: #fff; }
.map { flex: 1; min-width: 0; height: 100%; background: #fff; }
.province { fill: #cfe9f5; stroke: #ee0b10; stroke-width: 4px; stroke-linejoin: round; }
.vbar { width: 13px; display: flex; flex-direction: column; background: #f3f3f3; flex: none; }
.hbar { flex: 1; height: 12px; display: flex; background: #f3f3f3; }
.thumb { flex: 1; display: flex; align-items: center; justify-content: center; font-size: 7px; color: #555; border: 1px solid #c3c3c3; border-radius: 1px; }
.vbar .thumb { background: linear-gradient(to right, #f2f2f2, #c6c6c6); }
.hbar .thumb { background: linear-gradient(#f2f2f2, #c0c0c0); }
.ridges { width: 5px; height: 4px; background: repeating-linear-gradient(to right, #666 0 1px, transparent 1px 2px); }
.arrow { width: 12px; height: 12px; display: flex; align-items: center; justify-content: center; }
.arrow::after { content: ""; border: 2px solid transparent; }
.arrow.up::after { border-bottom: 3px solid #444; border-top: 0; }
.arrow.down::after { border-top: 3px solid #444; border-bottom: 0; }
.arrow.left::after { border-right: 3px solid #444; border-left: 0; }
.arrow.right::after { border-left: 3px solid #444; border-right: 0; }
.mapfoot { display: flex; align-items: center; height: 12px; padding-right: 13px; flex: none; }
.mapfoot button { width: 12px; height: 12px; display: flex; align-items: center; justify-content: center; flex: none; }
.mapfoot .pressed { width: 10px; background: #ccd0c7; }
.mapfoot .gap { margin-left: 3px; }
.mapfoot svg { width: 8px; height: 8px; }

header { display: flex; align-items: center; height: 16px; padding: 0 0 0 3px; flex: none; background: #c7d6e5; }
header h2 { flex: 1; color: #42566c; }
header button { width: 12px; height: 12px; display: flex; align-items: center; justify-content: center; }
header svg { width: 7px; height: 7px; }
.tools { display: flex; align-items: center; flex: none; height: 20px; background: linear-gradient(#fbfcfe, #dfe5f3); }
.tools button { width: 17px; height: 16px; display: flex; align-items: center; justify-content: center; flex: none; }
.tools svg { width: 12px; height: 12px; }
.tools .drop { width: 10px; }
.tools .sep { height: 14px; margin: 0 3px; background: #8c96a8; }

.catalog { width: 177px; flex: none; display: flex; flex-direction: column; background: #fff; }
.catalog .tools { padding-left: 2px; }
.catalog .large { width: 20px; }
.catalog .tools .chev { width: auto; margin-left: auto; padding-right: 2px; align-items: flex-start; line-height: 8px; color: #44597a; }
.location { display: flex; align-items: center; height: 18px; padding-left: 2px; flex: none; background: #f1f1f1; }
.location label { width: 38px; }
.location svg { width: 14px; height: 16px; padding: 2px 1px; background: #fff; flex: none; }
.location select { flex: 1; min-width: 0; padding: 0 2px; border: 0; }
.browse { flex: 1; min-height: 0; display: flex; border-top: 1px solid #999; border-left: 1px solid #999; }
.treecol { flex: 1; min-width: 0; display: flex; flex-direction: column; }
.tree { flex: 1; min-height: 0; display: flex; flex-direction: column; overflow: hidden; padding-left: 5px; }
.tree li { flex: 1; min-height: 0; display: flex; align-items: center; white-space: nowrap; }
.tree svg, .layers svg { width: 12px; height: 12px; margin-right: 3px; flex: none; }
.tree .l1 { padding-left: 14px; }
.tree .l2 { padding-left: 28px; }
.tree .l3 { padding-left: 53px; }
.current { background: #f2f2f2; }
.box { width: 7px; height: 7px; margin-right: 5px; border: 1px solid #a5adb8; background: linear-gradient(#456, #456) center / 3px 1px no-repeat, linear-gradient(#456, #456) center / 1px 3px no-repeat, #fff; }
.box.minus { background: linear-gradient(#456, #456) center / 3px 1px no-repeat, #fff; }
.box.none { visibility: hidden; }
.treefoot { height: 19px; flex: none; background: #f0f0f0; border-right: 36px solid #fff; }
.treefoot .thumb { flex: none; width: 98px; }

.contents { width: 140px; flex: none; display: flex; flex-direction: column; padding-left: 6px; background: #f0f0f0; border-left: 1px solid #ddd; }
.contents .tools { background: #f8f8f8; }
.contents .tools button { width: 16px; }
.contents .tools .on { border: 1px solid #70a6d9; background: #deecfa; }
.layers { flex: 1; padding: 0 0 0 4px; background: #fff; border-top: 1px solid #999; border-left: 1px solid #999; }
.layers li { display: flex; align-items: center; height: 15px; }
.layers .l1 { padding-left: 14px; }
.layers .l2 { padding-left: 36px; }
input[type="checkbox"] { appearance: none; width: 9px; height: 9px; margin-right: 5px; border: 1px solid #333; background: #fff; display: flex; align-items: center; justify-content: center; }
input[type="checkbox"]:checked::after { content: "✓"; font: bold 9px/8px "DejaVu Sans", sans-serif; }
.swatch { width: 12px; height: 8px; border: 1px solid #85a68d; background: #cdf0d2; }
.swatch.red { width: 15px; height: 12px; border: 4px solid #f00014; border-radius: 2px; background: #fff; }
.caret { width: 3px; height: 12px; margin-left: 1px; background: #3b8de0; }
```
